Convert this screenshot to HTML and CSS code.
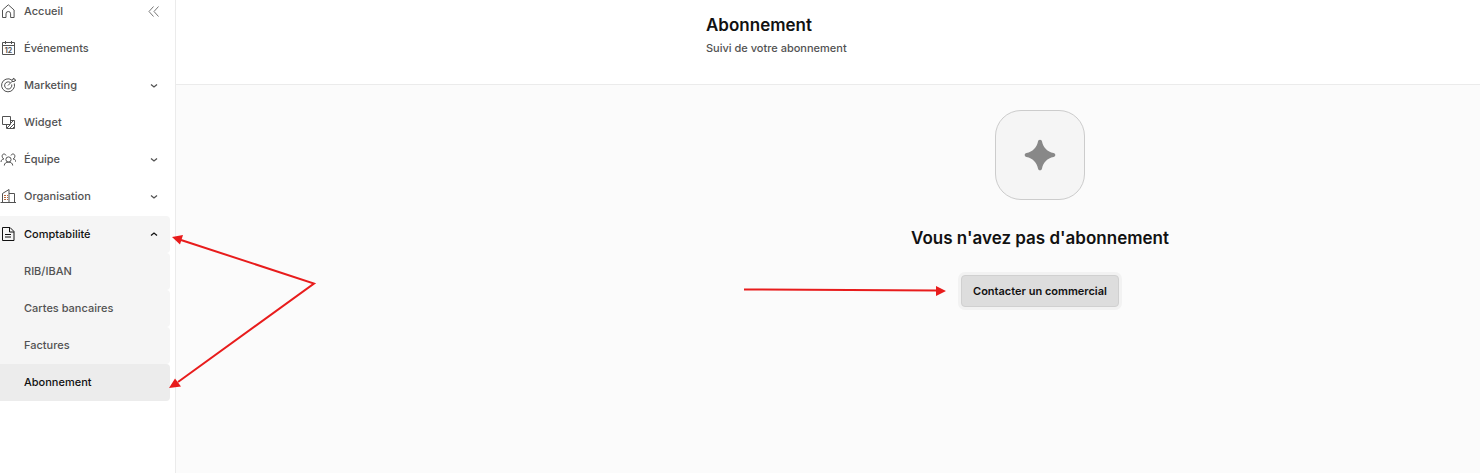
FILE: index.html
```
<!DOCTYPE html>
<html lang="fr">

<head>
    <meta charset="UTF-8">
    <meta name="viewport" content="width=device-width, initial-scale=1.0">
    <title>Abonnement</title>
    <link rel="stylesheet" href="styles.css">
</head>

<body>
    <aside class="sidebar">
        <div class="sidebar-top">
            <a class="nav-link" href="#accueil">
                <svg class="icon" viewBox="0 0 16 16"><path d="M2.500 7v7.500h3.500v-3.700a2.300 2.300 0 0 1 4.600 0v3.700h3.500V7L8.300 1.800z" /></svg>
                <span>Accueil</span>
            </a>
            <button class="collapse-btn" type="button" aria-label="Réduire le menu">
                <svg viewBox="0 0 12 12"><path d="M5.500 1.500 1 6.500l4.500 5M10.500 1.500 6 6.500l4.500 5" /></svg>
            </button>
        </div>
        <nav>
            <a class="nav-link" href="#evenements">
                <svg class="icon" viewBox="0 0 16 16"><path d="M2.500 2.500h12v12h-12zM2.500 5.500h12M5.500 1v3M11.500 1v3" /><text x="8.500" y="13" text-anchor="middle">12</text></svg>
                <span>Événements</span>
            </a>
            <button class="nav-link" type="button" aria-expanded="false">
                <svg class="icon" viewBox="0 0 16 16"><path d="M11.800 3A6.500 6.500 0 1 0 14.300 6.500M10.300 5.500a3.600 3.600 0 1 0 1.400 2M8 8.500l4-4M12 4.500V2.800L14 1v2h2l-1.800 1.500z" /></svg>
                <span>Marketing</span>
                <svg class="chevron" viewBox="0 0 8 8"><path d="M1 3.500 4 6l3-2.500" /></svg>
            </button>
            <a class="nav-link" href="#widget">
                <svg class="icon" viewBox="0 0 16 16"><path d="M2.500 2.500h8v8h-8zM10.500 6.500h4v8h-8v-4M7 14l3-3M9.500 14.500l5-5M12.500 14.500l2-2M11 9l2.500-2.500" /></svg>
                <span>Widget</span>
            </a>
            <button class="nav-link" type="button" aria-expanded="false">
                <svg class="icon" viewBox="0 0 16 16"><circle cx="8.500" cy="8.500" r="2.600" /><path d="M4.300 14.500c0-2.200 1.800-3.400 4.200-3.400s4.200 1.200 4.200 3.400M1 11c.2-2 1.200-3 3-3.100C1.500 7 1.500 3 4 3c1 0 1.800.6 2 1.500M16 11c-.2-2-1.200-3-3-3.100C15.500 7 15.500 3 13 3c-1 0-1.800.6-2 1.500" /></svg>
                <span>Équipe</span>
                <svg class="chevron" viewBox="0 0 8 8"><path d="M1 3.500 4 6l3-2.500" /></svg>
            </button>
            <button class="nav-link" type="button" aria-expanded="false">
                <svg class="icon" viewBox="0 0 16 16"><path d="M.5 14.500h15.500M2.500 14.500V5.500l6.500-4v13M9 5.500h5.500v9" /><path class="windows" d="M4 7.500h4M4 9.500h4M4 11.500h4" /></svg>
                <span>Organisation</span>
                <svg class="chevron" viewBox="0 0 8 8"><path d="M1 3.500 4 6l3-2.500" /></svg>
            </button>
            <div class="nav-group">
                <button class="nav-link open" type="button" aria-expanded="true">
                    <svg class="icon" viewBox="0 0 16 16"><path d="M2.500 1.500h7.500l4 4v9H2.500zM9.500 1.500v4.500H14M5 8.500h6M5 11h6" /></svg>
                    <span>Comptabilité</span>
                    <svg class="chevron" viewBox="0 0 8 8"><path d="M1 5.500 4 3l3 2.500" /></svg>
                </button>
                <a class="sub-link" href="#rib">RIB/IBAN</a>
                <a class="sub-link" href="#cartes">Cartes bancaires</a>
                <a class="sub-link" href="#factures">Factures</a>
                <a class="sub-link current" href="#abonnement" aria-current="page">Abonnement</a>
            </div>
        </nav>
    </aside>

    <main>
        <header class="page-header">
            <h1>Abonnement</h1>
            <p>Suivi de votre abonnement</p>
        </header>
        <section class="empty-state">
            <div class="empty-icon">
                <svg viewBox="0 0 32 32"><path d="M16 .7c1.200 0 1.800.7 2 1.800 1.300 6.200 5.300 10.200 11.500 11.500 1.100.2 1.800.9 1.800 2s-.7 1.800-1.800 2C23.300 19.300 19.300 23.300 18 29.500c-.2 1.100-.8 1.800-2 1.800s-1.800-.7-2-1.800C12.700 23.300 8.700 19.300 2.500 18 1.400 17.800.7 17.100.7 16s.7-1.800 1.800-2C8.700 12.700 12.700 8.700 14 2.500c.2-1.100.8-1.800 2-1.800z" /></svg>
            </div>
            <h2>Vous n'avez pas d'abonnement</h2>
            <button class="contact-btn" type="button">Contacter un commercial</button>
        </section>
    </main>

    <!-- Red arrows drawn over the page -->
    <svg class="arrows" width="960" height="400" viewBox="0 0 960 400" aria-hidden="true">
        <path class="line" d="M181 240l133 43.500L178 382M744 289.500l193 1" />
        <path class="head" d="M172 237l11-2-3 9.500zM169 388l6-9.500 6 8zM946 291l-10-5v10z" />
    </svg>
</body>

</html>
```
FILE: styles.css
```
* {
    box-sizing: border-box;
    margin: 0;
    padding: 0;
}

body {
    display: flex;
    min-height: 100vh;
    font-family: Inter, "Liberation Sans", sans-serif;
    font-size: 11px;
    font-weight: 500;
    color: #525252;
    background-color: #fff;
}

button {
    font: inherit;
    color: inherit;
    background: none;
    border: none;
    cursor: pointer;
}

a {
    color: inherit;
    text-decoration: none;
}

.sidebar {
    flex: none;
    width: 176px;
    padding-right: 5px;
    border-right: 1px solid #ebebeb;
}

.sidebar-top {
    display: flex;
    justify-content: space-between;
    height: 22px;
    margin-bottom: 7px;
    padding-right: 10px;
}

.sidebar-top .nav-link {
    width: auto;
    height: 22px;
}

.collapse-btn svg {
    display: block;
    width: 12px;
    height: 12px;
    fill: none;
    stroke: #777;
}

.nav-link {
    display: flex;
    align-items: center;
    gap: 8px;
    width: 100%;
    height: 37px;
    padding-right: 12px;
    text-align: left;
}

.icon {
    flex: none;
    width: 16px;
    height: 16px;
    fill: none;
    stroke: currentColor;
}

.icon text {
    font-size: 7px;
    font-weight: 700;
    fill: currentColor;
    stroke: none;
}

.icon .windows {
    stroke: #b5683c;
    stroke-dasharray: 2 1;
}

.chevron {
    width: 8px;
    height: 8px;
    margin-left: auto;
    fill: none;
    stroke: currentColor;
    stroke-width: 1.3;
}

.nav-group {
    margin-top: 2px;
}

.open,
.sub-link {
    padding-bottom: 2px;
    background-color: #f5f5f5;
    border-radius: 0 4px 4px 0;
}

.open,
.current {
    color: #111;
}

.sub-link {
    display: flex;
    align-items: center;
    height: 37px;
    padding-left: 24px;
}

.sub-link.current {
    background-color: #ececec;
}

main {
    flex: 1;
    background-color: #fbfbfb;
}

.page-header {
    height: 85px;
    padding: 14px 106px 0 530px;
    background-color: #fff;
    border-bottom: 1px solid #ebebeb;
}

.page-header h1 {
    font-size: 17px;
    font-weight: 600;
    line-height: 22px;
    color: #111;
}

.page-header p {
    margin-top: 4px;
    line-height: 16px;
}

.empty-state {
    display: flex;
    flex-direction: column;
    align-items: center;
    padding: 25px 106px 0 530px;
    color: #111;
}

.empty-icon {
    display: flex;
    align-items: center;
    justify-content: center;
    width: 90px;
    height: 90px;
    background-color: #f5f5f5;
    border: 1px solid #ccc;
    border-radius: 26px;
}

.empty-icon svg {
    width: 32px;
    height: 32px;
    fill: #888;
}

.empty-state h2 {
    margin: 27px 0 26px;
    font-size: 17px;
    font-weight: 600;
    line-height: 22px;
    white-space: nowrap;
}

.contact-btn {
    height: 32px;
    padding: 0 11px;
    font-weight: 600;
    background-color: #ddd;
    border: 1px solid #d0d0d0;
    border-radius: 4px;
    box-shadow: 0 0 0 3px #f2f2f2;
    white-space: nowrap;
}

.arrows {
    position: absolute;
    top: 0;
    left: 0;
    pointer-events: none;
}

.arrows .line {
    fill: none;
    stroke: #e81c1c;
    stroke-width: 2;
}

.arrows .head {
    fill: #e81c1c;
}
```
